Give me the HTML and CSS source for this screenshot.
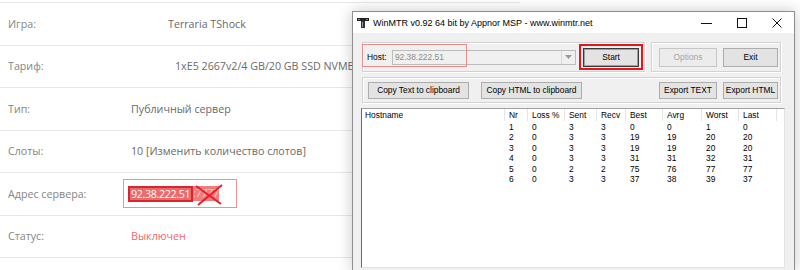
FILE: index.html
```html
<!DOCTYPE html>
<html lang="ru">
<head>
  <meta charset="UTF-8" />
  <meta name="viewport" content="width=device-width, initial-scale=1.0" />
  <title>Сервер и WinMTR</title>
  <link rel="stylesheet" href="styles.css">
</head>
<body>
  <!-- Server info panel -->
  <div class="info">
    <div class="row"><span class="label">Игра:</span><span class="value value-game">Terraria TShock</span></div>
    <div class="row"><span class="label">Тариф:</span><span class="value value-plan">1xE5 2667v2/4 GB/20 GB SSD NVME</span></div>
    <div class="row"><span class="label">Тип:</span><span class="value">Публичный сервер</span></div>
    <div class="row"><span class="label">Слоты:</span><span class="value">10 [Изменить количество слотов]</span></div>
    <div class="row">
      <span class="label">Адрес сервера:</span>
      <span class="value">
        <span class="addr">
          <span class="ip">92.38.222.51</span><span class="port">:7777</span>
          <svg class="cross" width="28" height="22" viewBox="0 0 28 22">
            <path d="M1 2 L26 20 M3 21 L27 1" stroke="#e3202b" stroke-width="2" fill="none" />
          </svg>
        </span>
      </span>
    </div>
    <div class="row"><span class="label">Статус:</span><span class="value status-off">Выключен</span></div>
  </div>

  <!-- WinMTR window -->
  <div class="window">
    <div class="titlebar">
      <svg class="app-icon" width="12" height="10" viewBox="0 0 12 10">
        <rect x="0" y="0" width="12" height="3" fill="#222" />
        <rect x="1" y="1" width="2" height="1" fill="#888" />
        <rect x="9" y="1" width="2" height="1" fill="#888" />
        <rect x="4" y="3" width="4" height="7" fill="#333" />
        <rect x="5" y="4" width="1" height="5" fill="#999" />
      </svg>
      <span class="title">WinMTR v0.92 64 bit by Appnor MSP - www.winmtr.net</span>
      <div class="caption-btns">
        <span class="cap">
          <svg width="11" height="10" viewBox="0 0 11 10"><path d="M0 5.5 H11" stroke="#111" stroke-width="1" /></svg>
        </span>
        <span class="cap">
          <svg width="10" height="10" viewBox="0 0 10 10"><rect x="0.5" y="0.5" width="9" height="9" stroke="#111" fill="none" /></svg>
        </span>
        <span class="cap">
          <svg width="10" height="10" viewBox="0 0 10 10"><path d="M0.5 0.5 L9.5 9.5 M9.5 0.5 L0.5 9.5" stroke="#111" stroke-width="1" /></svg>
        </span>
      </div>
    </div>

    <div class="client">
      <div class="top-row">
        <div class="group group-host">
          <span class="host-label">Host:</span>
          <div class="combo">
            <span class="combo-text">92.38.222.51</span>
            <span class="combo-arrow"><svg width="7" height="4" viewBox="0 0 7 4"><path d="M0 0 H7 L3.5 4 Z" fill="#9a9a9a" /></svg></span>
          </div>
          <button class="btn btn-default btn-start">Start</button>
        </div>
        <div class="group group-actions">
          <button class="btn btn-disabled btn-options">Options</button>
          <button class="btn btn-exit">Exit</button>
        </div>
      </div>

      <div class="group group-export">
        <button class="btn btn-copy">Copy Text to clipboard</button>
        <button class="btn btn-copy">Copy HTML to clipboard</button>
        <button class="btn btn-export-text">Export TEXT</button>
        <button class="btn btn-export-html">Export HTML</button>
      </div>

      <!-- Trace results -->
      <div class="list">
        <div class="list-row list-head">
          <span>Hostname</span><span>Nr</span><span>Loss %</span><span>Sent</span><span>Recv</span>
          <span>Best</span><span>Avrg</span><span>Worst</span><span>Last</span><span></span>
        </div>
        <div class="list-body">
          <div class="list-row"><span></span><span>1</span><span>0</span><span>3</span><span>3</span><span>0</span><span>0</span><span>1</span><span>0</span><span></span></div>
          <div class="list-row"><span></span><span>2</span><span>0</span><span>3</span><span>3</span><span>19</span><span>19</span><span>20</span><span>20</span><span></span></div>
          <div class="list-row"><span></span><span>3</span><span>0</span><span>3</span><span>3</span><span>19</span><span>19</span><span>20</span><span>20</span><span></span></div>
          <div class="list-row"><span></span><span>4</span><span>0</span><span>3</span><span>3</span><span>31</span><span>31</span><span>32</span><span>31</span><span></span></div>
          <div class="list-row"><span></span><span>5</span><span>0</span><span>2</span><span>2</span><span>75</span><span>76</span><span>77</span><span>77</span><span></span></div>
          <div class="list-row"><span></span><span>6</span><span>0</span><span>3</span><span>3</span><span>37</span><span>38</span><span>39</span><span>37</span><span></span></div>
        </div>
      </div>
    </div>

    <!-- red annotation frames -->
    <div class="mark mark-host"></div>
    <div class="mark mark-start"></div>
  </div>
</body>
</html>
```

FILE: styles.css
```css
/* Base Reset */
*, *::before, *::after {
  box-sizing: border-box;
  margin: 0;
  padding: 0;
}
body {
  background: #fff;
  font-family: 'Open Sans', sans-serif;
  overflow: hidden;
}

/* Server info panel */
.info {
  width: 520px;
  margin-top: 2px;
  border-top: 1px solid #e8e8e8;
  font-size: 10.7px;
}
.row {
  display: flex;
  align-items: center;
  height: 42.5px;
  border-bottom: 1px solid #e8e8e8;
}
.label {
  width: 131px;
  padding-left: 8px;
  color: #858585;
}
.value {
  color: #6a6a6a;
  white-space: nowrap;
}
.value-game { padding-left: 37px; }
.value-plan { padding-left: 44px; }
.status-off { color: #f26a6a; }

/* Highlighted server address */
.addr {
  position: relative;
  display: inline-flex;
  align-items: center;
  margin-left: -8px;
  padding: 5.5px 17px 5.5px 4px;
  border: 1px solid #f19090;
}
.ip {
  height: 16px;
  line-height: 12px;
  padding: 0 1px;
  background: #ee6a6a;
  border: 2px solid #d92530;
  color: #fff;
  letter-spacing: -0.35px;
}
.port {
  height: 15px;
  line-height: 15px;
  background: #f07c7c;
  color: #f8caca;
  letter-spacing: -0.35px;
}
.cross {
  position: absolute;
  left: 71px;
  top: 4px;
}

/* WinMTR window */
.window {
  position: absolute;
  left: 352px;
  top: 11px;
  width: 443px;
  height: 259px;
  background: #f0f0f0;
  border: 1px solid #8e8e8e;
  border-bottom: none;
  box-shadow: 0 0 14px rgba(0, 0, 0, 0.22);
  font-family: 'Liberation Sans', Arial, sans-serif;
  font-size: 8.4px;
  color: #000;
}
.titlebar {
  display: flex;
  align-items: center;
  height: 21px;
  padding-left: 4px;
  background: #fff;
}
.app-icon { flex: none; }
.title {
  margin-left: 4px;
  font-size: 9px;
  white-space: nowrap;
}
.caption-btns {
  display: flex;
  margin-left: auto;
  height: 100%;
}
.cap {
  display: flex;
  align-items: center;
  justify-content: center;
  width: 35px;
}

.client { padding: 9px 0 0 9px; }
.top-row {
  display: flex;
  gap: 6px;
}

/* Group boxes */
.group {
  display: flex;
  align-items: center;
  border: 1px solid #d2d2d2;
  box-shadow: inset 1px 1px #fff, 1px 1px #fff;
}
.group-host {
  width: 283px;
  height: 30px;
  padding: 0 5px 0 4px;
}
.host-label { width: 25px; }
.combo {
  display: flex;
  align-items: center;
  width: 185px;
  height: 15px;
  border: 1px solid #bcbcbc;
  background: #f0f0f0;
}
.combo-text {
  flex: 1;
  padding-left: 2px;
  color: #8c8c8c;
}
.combo-arrow {
  display: flex;
  align-items: center;
  justify-content: center;
  width: 14px;
  height: 100%;
  border-left: 1px solid #dadada;
}
.group-actions {
  width: 130px;
  height: 30px;
  padding-left: 7px;
  gap: 6px;
}
.group-export {
  width: 419px;
  height: 26px;
  margin-top: 5px;
  padding: 0 2px 0 5px;
}

/* Buttons */
.btn {
  height: 19px;
  font-family: inherit;
  font-size: 8.4px;
  color: #000;
  background: #e3e3e3;
  border: 1px solid #adadad;
}
.btn-start {
  width: 56px;
  margin-left: 7px;
}
.btn-default {
  border-color: #3a3a3a;
  box-shadow: inset 0 0 0 1px #a0a0a0;
}
.btn-disabled {
  color: #a6a6a6;
  background: #ececec;
  border-color: #c6c6c6;
}
.btn-options { width: 58px; }
.btn-exit { width: 55px; }
.group-export .btn { height: 17px; }
.btn-copy { width: 101px; margin-right: 12px; }
.btn-export-text { width: 58px; margin-left: auto; margin-right: 6px; }
.btn-export-html { width: 55px; }

/* Result list */
.list {
  width: 424px;
  height: 160px;
  margin: 5px 0 0 -1px;
  background: #fff;
  border: 1px solid;
  border-color: #a0a0a0 #e3e3e3 #e3e3e3 #696969;
}
.list-row {
  display: grid;
  grid-template-columns: 143px 23px 37px 32px 29px 37px 39px 37px 38px 1fr;
  line-height: 10.4px;
}
.list-row span {
  padding-left: 4px;
  white-space: nowrap;
}
.list-row span:first-child { padding-left: 3px; }
.list-head {
  height: 12px;
  line-height: 12px;
}
.list-head span { border-right: 1px solid #e5e5e5; }
.list-head span:last-child { border-right: none; }
.list-body { padding-top: 1px; }

/* Red annotation frames */
.mark { position: absolute; }
.mark-host {
  left: 9px;
  top: 32px;
  width: 105px;
  height: 23px;
  border: 1px solid #ec8a8a;
}
.mark-start {
  left: 226px;
  top: 32px;
  width: 64px;
  height: 26px;
  border: 2px solid #e8141c;
}
```
